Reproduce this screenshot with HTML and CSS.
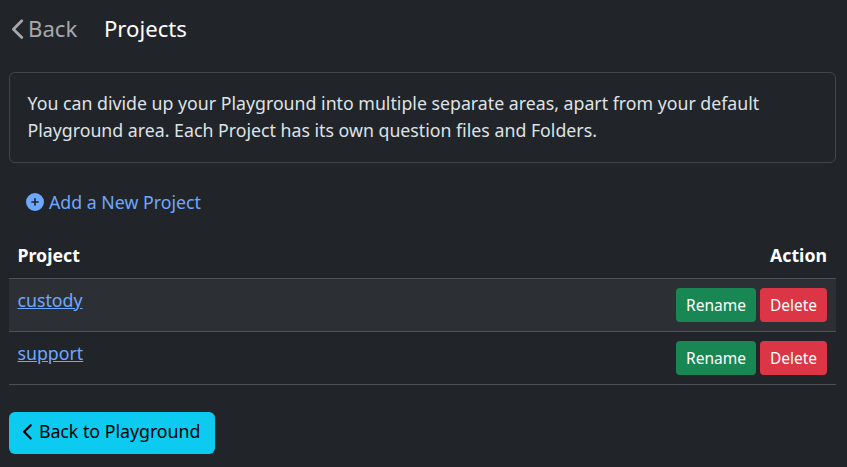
FILE: index.html
```html
<!DOCTYPE html>
<html lang="en">
<head>
<meta charset="utf-8">
<title>Projects</title>
<link rel="stylesheet" href="styles.css">
</head>
<body>
<nav class="navbar">
  <a class="back" href="#"><svg class="chev" viewBox="0 0 320 512"><path d="M9.4 233.400c-12.500 12.500-12.500 32.800 0 45.300l192 192c12.500 12.500 32.800 12.500 45.300 0s12.500-32.800 0-45.300L77.300 256 246.600 86.600c12.500-12.500 12.500-32.800 0-45.300s-32.800-12.500-45.300 0l-192 192z"/></svg><span>Back</span></a>
  <span class="title">Projects</span>
</nav>
<main>
  <div class="card">You can divide up your Playground into multiple separate areas, apart from your default Playground area. Each Project has its own question files and Folders.</div>
  <a class="add" href="#"><svg class="plus" viewBox="0 0 512 512"><path d="M256 512A256 256 0 1 0 256 0a256 256 0 1 0 0 512zM232 344V280H168c-13.300 0-24-10.700-24-24s10.700-24 24-24h64V168c0-13.300 10.700-24 24-24s24 10.700 24 24v64h64c13.300 0 24 10.700 24 24s-10.700 24-24 24H280v64c0 13.300-10.700 24-24 24s-24-10.700-24-24z"/></svg><span>Add a New Project</span></a>
  <table class="projects">
    <thead><tr><th>Project</th><th class="action">Action</th></tr></thead>
    <tbody>
      <tr class="striped"><td><a href="#">custody</a></td><td class="action"><div class="buttons"><a class="btn rename" href="#">Rename</a><a class="btn delete" href="#">Delete</a></div></td></tr>
      <tr><td><a href="#">support</a></td><td class="action"><div class="buttons"><a class="btn rename" href="#">Rename</a><a class="btn delete" href="#">Delete</a></div></td></tr>
    </tbody>
  </table>
  <a class="return" href="#"><svg class="chev" viewBox="0 0 320 512"><path d="M9.4 233.400c-12.500 12.500-12.500 32.800 0 45.300l192 192c12.500 12.500 32.800 12.500 45.300 0s12.500-32.800 0-45.300L77.300 256 246.600 86.600c12.500-12.500 12.500-32.800 0-45.300s-32.800-12.500-45.300 0l-192 192z"/></svg><span>Back to Playground</span></a>
</main>
</body>
</html>
```

FILE: styles.css
```css
* { box-sizing: border-box; }
html { background: #212529; }
body { margin: 0; background: #212529; color: #dee2e6; font: 17.740px/27px "Noto Sans", sans-serif; overflow: hidden; }
svg { fill: currentColor; flex: none; }
.navbar { height: 72px; padding: 11px 12px 0; display: flex; align-items: flex-start; gap: 26.700px; font-size: 22.150px; line-height: 34px; }
.back { display: flex; align-items: center; gap: 2px; color: #a6a8a9; text-decoration: none; }
.back .chev { width: 14px; height: 22.400px; margin-top: 2px; }
.title { color: #fff; }
main { padding: 0 11px 0 9px; display: flex; flex-direction: column; align-items: flex-start; }
.card { width: 100%; height: 91px; border: 1px solid #42464a; border-radius: 6px; padding: 17px 17.500px; }
.add { display: flex; align-items: center; gap: 5px; margin: 26px 0 0 17px; height: 27px; color: #6ea8fe; text-decoration: none; }
.plus { width: 18px; height: 18px; margin-bottom: 1px; }
.projects { width: 100%; margin-top: 18px; border-collapse: collapse; }
th { height: 44px; padding: 0 9px 0 8.500px; text-align: left; color: #fff; font-weight: 700; border-bottom: 1px solid #4d5154; }
td { height: 53px; padding: 8px 9px 9px 8.500px; vertical-align: top; border-bottom: 1px solid #4d5154; line-height: 27px; }
td a { color: #6ea8fe; }
.striped { background: #2c3034; }
.action { text-align: right; }
.buttons { display: flex; justify-content: flex-end; gap: 4px; margin-top: 1px; }
.btn { height: 34px; line-height: 34px; border-radius: 4px; text-align: center; color: #fff; font-size: 15.500px; text-decoration: none; }
.rename { width: 80px; background: #198754; }
.delete { width: 67px; background: #dc3545; }
.return { margin-top: 27px; width: 206px; height: 42px; padding: 0 13px 2px 13.700px; display: flex; align-items: center; gap: 5.200px; border-radius: 6px; background: #0dcaf0; color: #000; text-decoration: none; white-space: nowrap; }
.return .chev { width: 11px; height: 17.700px; margin-top: 1px; }
```
